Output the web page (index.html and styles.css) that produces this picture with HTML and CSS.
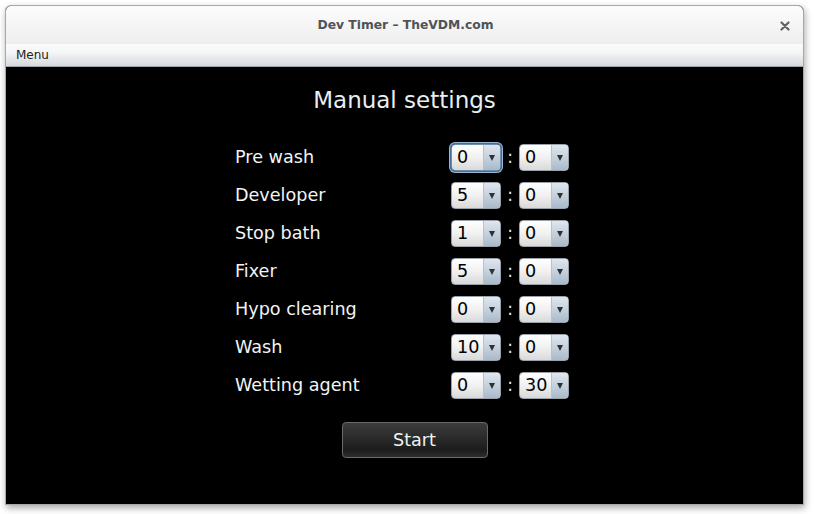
FILE: index.html
```html
<!DOCTYPE html>
<html>
<head>
<meta charset="utf-8">
<title>Dev Timer</title>
<link rel="stylesheet" href="styles.css">
</head>
<body>
<div class="window">
  <div class="titlebar">
    <span class="title">Dev Timer – TheVDM.com</span>
    <svg class="close" width="10" height="10" viewBox="0 0 10 10"><path d="M1.5 1.5 L8.5 8.5 M8.5 1.5 L1.5 8.5" stroke="#5d6468" stroke-width="2.2" stroke-linecap="round"/></svg>
  </div>
  <div class="menubar"><span class="menu">Menu</span></div>
  <div class="content">
    <h1 class="heading">Manual settings</h1>
    <div class="grid">
      <span class="label">Pre wash</span>
      <div class="combo focus"><span class="val">0</span><span class="arrow"></span></div>
      <span class="colon">:</span>
      <div class="combo"><span class="val">0</span><span class="arrow"></span></div>

      <span class="label">Developer</span>
      <div class="combo"><span class="val">5</span><span class="arrow"></span></div>
      <span class="colon">:</span>
      <div class="combo"><span class="val">0</span><span class="arrow"></span></div>

      <span class="label">Stop bath</span>
      <div class="combo"><span class="val">1</span><span class="arrow"></span></div>
      <span class="colon">:</span>
      <div class="combo"><span class="val">0</span><span class="arrow"></span></div>

      <span class="label">Fixer</span>
      <div class="combo"><span class="val">5</span><span class="arrow"></span></div>
      <span class="colon">:</span>
      <div class="combo"><span class="val">0</span><span class="arrow"></span></div>

      <span class="label">Hypo clearing</span>
      <div class="combo"><span class="val">0</span><span class="arrow"></span></div>
      <span class="colon">:</span>
      <div class="combo"><span class="val">0</span><span class="arrow"></span></div>

      <span class="label">Wash</span>
      <div class="combo"><span class="val">10</span><span class="arrow"></span></div>
      <span class="colon">:</span>
      <div class="combo"><span class="val">0</span><span class="arrow"></span></div>

      <span class="label">Wetting agent</span>
      <div class="combo"><span class="val">0</span><span class="arrow"></span></div>
      <span class="colon">:</span>
      <div class="combo"><span class="val">30</span><span class="arrow"></span></div>
    </div>
    <button class="start">Start</button>
  </div>
</div>
</body>
</html>
```
FILE: styles.css
```css
html, body {
  margin: 0;
  padding: 0;
  background: #ffffff;
}
body {
  font-family: "DejaVu Sans", Verdana, sans-serif;
  padding: 5px 0 0 5px;
  width: 814px;
  height: 514px;
  box-sizing: border-box;
  overflow: hidden;
}
.window {
  width: 799px;
  height: 500px;
  box-sizing: border-box;
  border: 1px solid #a8a8a8;
  border-radius: 6px 6px 0 0;
  box-shadow: 1px 3px 7px rgba(0,0,0,0.35);
  display: flex;
  flex-direction: column;
  overflow: hidden;
  background: #000;
}
.titlebar {
  height: 38px;
  flex: none;
  background: linear-gradient(#fcfcfc, #eeeeee);
  display: flex;
  align-items: center;
  justify-content: center;
  position: relative;
}
.title {
  font-weight: bold;
  font-size: 12.3px;
  color: #4f5356;
  margin-left: 2px;
}
.close {
  position: absolute;
  right: 13px;
  top: 15px;
}
.menubar {
  height: 22px;
  flex: none;
  background: linear-gradient(#fafbfc 0%, #f3f5f6 40%, #d6d9de 100%);
  border-bottom: 1px solid #9fa3a8;
  display: flex;
  align-items: center;
  padding-left: 10px;
}
.menu {
  font-size: 12px;
  color: #222;
}
.content {
  flex: 1;
  background: #000;
  display: flex;
  flex-direction: column;
  align-items: center;
}
.heading {
  margin: 20px 0 0 0;
  font-weight: normal;
  font-size: 23px;
  line-height: 27px;
  color: #e8eef2;
}
.grid {
  margin-top: 30px;
  padding-right: 5px;
  display: grid;
  grid-template-columns: 216px 50px 18px 50px;
  grid-auto-rows: 27px;
  row-gap: 11px;
  align-items: center;
}
.label {
  font-size: 17.6px;
  line-height: 27px;
  color: #f2f4f5;
}
.colon {
  font-size: 17px;
  color: #e0ecf0;
  text-align: center;
  line-height: 27px;
}
.combo {
  height: 27px;
  box-sizing: border-box;
  border: 1px solid #9aa1a8;
  border-radius: 4px;
  background: linear-gradient(#ffffff 0%, #f1f1f1 50%, #d9d9d9 100%);
  display: flex;
  overflow: hidden;
}
.combo.focus {
  box-shadow: 0 0 0 1px #3e6f9e, 0 0 0 2px #9ab8d4;
  border-color: #6d8fb0;
}
.val {
  flex: 1;
  font-size: 17.6px;
  line-height: 25px;
  color: #000;
  padding-left: 5px;
}
.arrow {
  width: 16px;
  flex: none;
  border-left: 1px solid #b8c2cc;
  background: linear-gradient(#dfe6ee 0%, #c5d1dd 50%, #a9bacb 100%);
  display: flex;
  align-items: center;
  justify-content: center;
}
.arrow::after {
  content: "";
  border-left: 3.5px solid transparent;
  border-right: 3.5px solid transparent;
  border-top: 6px solid #2c3238;
  margin-top: 1px;
}
.start {
  margin-top: 23px;
  width: 146px;
  height: 36px;
  border: 1px solid #6a6a6a;
  border-radius: 4px;
  background: linear-gradient(#3c3c3c 0%, #262626 55%, #1c1c1c 80%, #2e2e2e 100%);
  color: #eef4f6;
  font-family: "DejaVu Sans", Verdana, sans-serif;
  font-size: 17.6px;
  padding: 0;
  margin-left: 20px;
}
```
